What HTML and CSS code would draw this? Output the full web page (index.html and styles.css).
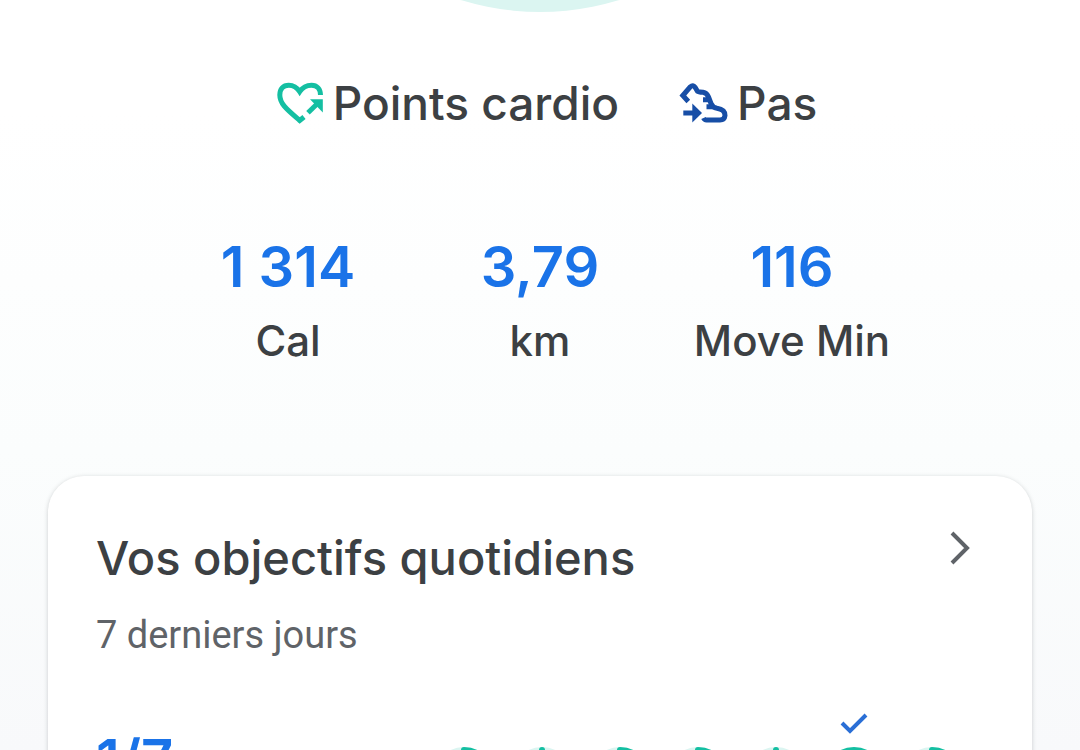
FILE: index.html
```html
<!DOCTYPE html>
<html lang="fr">

<head>
    <meta charset="UTF-8">
    <meta name="viewport" content="width=device-width, initial-scale=1">
    <title>Accueil</title>
    <link rel="stylesheet" href="styles.css">
</head>

<body>
    <main class="home">
        <!-- bottom edge of the big progress ring -->
        <svg class="dial" viewBox="0 528 540 12" aria-hidden="true">
            <circle cx="270" cy="270" r="270" />
        </svg>

        <div class="legend">
            <div class="legend-item">
                <svg class="icon heart" viewBox="0 0 48 44" aria-hidden="true">
                    <path class="line" d="M43.500 14C43.500 8 40 4.200 34.500 4.200C29.500 4.200 25.500 6.500 22.700 10.700C20 6.500 17 4.200 11.800 4.200C6 4.200 2.800 8 2.800 14C2.800 23 10 28.500 22.700 39.500L27 36" />
                    <path class="line" d="M31 31.800L40 23" />
                    <path class="fill" d="M33 18.300H45.800V31.500Z" />
                </svg>
                <span>Points cardio</span>
            </div>
            <div class="legend-item">
                <svg class="icon shoe" viewBox="0 0 50 44" aria-hidden="true">
                    <path class="line" d="M9.300 20.500L3.800 14.500L11.300 5.800Q14 3.500 16 6.200L18.500 10.200Q19.500 11 24 11.300Q28 12 29.500 16L32 22.500Q33.500 26.500 38 27.300Q46 28.500 46 34.500Q45.500 39 41 39H27.500Q25.500 39 24.500 37" />
                    <path class="line" d="M24 18.700H30.500M27.500 25.700H34.500" />
                    <path class="line" d="M4.300 32H15" />
                    <path class="fill" d="M13.300 22.500L23 32L13.300 41.500Z" />
                </svg>
                <span>Pas</span>
            </div>
        </div>

        <div class="stats">
            <div class="stat">
                <strong>1 314</strong>
                <span>Cal</span>
            </div>
            <div class="stat">
                <strong>3,79</strong>
                <span>km</span>
            </div>
            <div class="stat">
                <strong>116</strong>
                <span>Move Min</span>
            </div>
        </div>

        <section class="card">
            <div class="card-header">
                <div>
                    <h2>Vos objectifs quotidiens</h2>
                    <p>7 derniers jours</p>
                </div>
                <button class="more" type="button" aria-label="Afficher les objectifs">
                    <svg viewBox="0 0 24 36" aria-hidden="true">
                        <path d="M4 3L19 18L4 33" />
                    </svg>
                </button>
            </div>

            <div class="goals">
                <strong class="score">1/7</strong>
                <div class="days">
                    <div class="day">
                        <svg class="ring" viewBox="0 0 60 60"><circle cx="30" cy="30" r="27" /><path d="M30 3A27 27 0 0 1 57 30" /></svg>
                    </div>
                    <div class="day">
                        <svg class="ring" viewBox="0 0 60 60"><circle cx="30" cy="30" r="27" /><path d="M30 3L30 3" /></svg>
                    </div>
                    <div class="day">
                        <svg class="ring" viewBox="0 0 60 60"><circle cx="30" cy="30" r="27" /><path d="M30 3A27 27 0 0 1 57 30" /></svg>
                    </div>
                    <div class="day">
                        <svg class="ring" viewBox="0 0 60 60"><circle cx="30" cy="30" r="27" /><path d="M30 3A27 27 0 0 1 57 30" /></svg>
                    </div>
                    <div class="day">
                        <svg class="ring" viewBox="0 0 60 60"><circle cx="30" cy="30" r="27" /><path d="M30 3L30 3" /></svg>
                    </div>
                    <div class="day">
                        <svg class="check" viewBox="0 0 28 22" aria-hidden="true"><path d="M2 11L10 19L26 3" /></svg>
                        <svg class="ring done" viewBox="0 0 60 60"><circle cx="30" cy="30" r="27" /></svg>
                    </div>
                    <div class="day">
                        <svg class="ring" viewBox="0 0 60 60"><circle cx="30" cy="30" r="27" /><path d="M30 3A27 27 0 0 1 57 30" /></svg>
                    </div>
                </div>
            </div>
        </section>
    </main>
</body>

</html>
```

FILE: styles.css
```css
* {
    margin: 0;
    padding: 0;
    box-sizing: border-box;
}

body {
    font-family: Inter, "Open Sans", sans-serif;
    color: #3c4043;
}

.home {
    display: flex;
    flex-direction: column;
    height: 100vh;
    overflow: hidden;
    background: linear-gradient(#ffffff 15%, #fbfdfd 60%, #f8f9fb);
}

.dial {
    flex: none;
    align-self: center;
    width: 540px;
    max-width: 100%;
    height: 12px;
    fill: #dbf5f1;
}

.legend {
    display: flex;
    justify-content: center;
    gap: 60px;
    margin-top: 59px;
    padding-left: 14px;
    font-size: 46px;
    font-weight: 500;
    line-height: 64px;
}

.legend-item {
    display: flex;
    align-items: center;
    gap: 8px;
}

.icon {
    height: 44px;
}

.icon .line {
    fill: none;
    stroke: currentColor;
    stroke-width: 5;
}

.icon .fill {
    fill: currentColor;
}

.heart {
    width: 48px;
    color: #14bfa2;
}

.shoe {
    width: 50px;
    color: #174ea6;
}

.stats {
    display: grid;
    grid-template-columns: repeat(3, 1fr);
    margin-top: 96px;
    padding: 0 15%;
    text-align: center;
}

.stat strong {
    display: block;
    font-size: 56px;
    font-weight: 600;
    line-height: 72px;
    color: #1a73e8;
}

.stat span {
    display: block;
    margin-top: 8px;
    font-size: 42px;
    font-weight: 500;
    line-height: 60px;
    white-space: nowrap;
}

.card {
    flex: none;
    margin: 105px 48px 0;
    padding: 48px 48px 60px;
    border-radius: 36px;
    background: #ffffff;
    box-shadow: 0 1px 4px rgba(60, 64, 67, 0.25);
}

.card-header {
    display: flex;
    justify-content: space-between;
    align-items: flex-start;
}

.card h2 {
    font-size: 47px;
    font-weight: 500;
    line-height: 68px;
}

.card p {
    margin-top: 19px;
    font-family: Roboto, sans-serif;
    font-size: 38px;
    line-height: 48px;
    color: #5f6368;
}

.more {
    margin: 6px 12px 0 0;
    border: none;
    background: none;
    cursor: pointer;
}

.more svg {
    display: block;
    width: 24px;
    height: 36px;
}

.more path {
    fill: none;
    stroke: #5f6368;
    stroke-width: 4;
}

.goals {
    display: flex;
    justify-content: space-between;
    align-items: flex-start;
    margin-top: 53px;
    padding-right: 22px;
}

.score {
    margin-top: 12px;
    font-size: 56px;
    font-weight: 600;
    line-height: 72px;
    color: #1a73e8;
}

.days {
    display: flex;
    align-items: flex-end;
    gap: 18px;
}

.day {
    display: flex;
    flex-direction: column;
    align-items: center;
    gap: 13px;
}

.check {
    width: 28px;
    height: 22px;
    fill: none;
    stroke: #2a6fd6;
    stroke-width: 4;
}

.ring {
    width: 60px;
    height: 60px;
    fill: none;
    stroke: #dbf5f1;
    stroke-width: 6;
}

.ring path {
    stroke: #14bfa2;
    stroke-linecap: round;
}

.ring.done {
    stroke: #14bfa2;
}
```
